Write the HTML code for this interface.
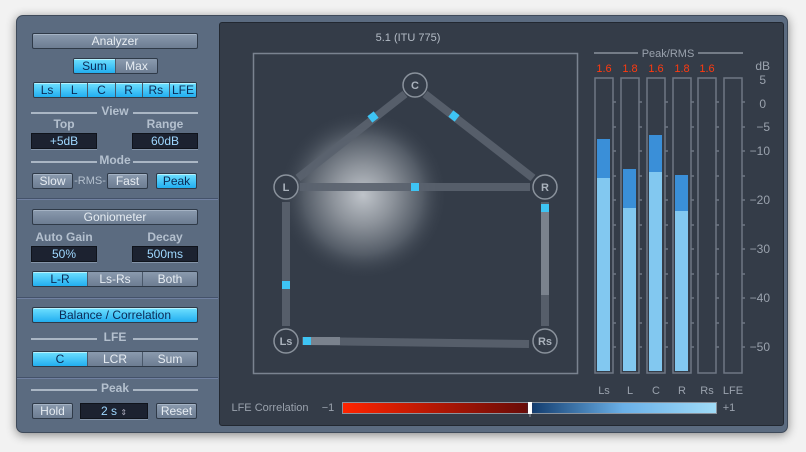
<!DOCTYPE html><html><head><meta charset="utf-8"><style>
*{box-sizing:border-box;margin:0;padding:0}
body{width:806px;height:452px;background:#f2f2f2;position:relative;overflow:hidden;font-family:"Liberation Sans",sans-serif}
.win{position:absolute;left:16px;top:15px;width:772px;height:418px;background:#5b6b80;border-radius:7px;box-shadow:0 2px 10px rgba(0,0,0,.45);border:1px solid #3e4a5a}
.a{position:absolute}
.btn{position:absolute;height:16px;background:linear-gradient(#8a9aae,#6d7d92);border:1px solid #2f3a48;border-radius:2px;color:#e6ecf2;font-size:12px;text-align:center;line-height:14px;box-shadow:inset 0 1px 0 #a5b3c4}
.on{background:linear-gradient(#6fe0ff,#22aef0);color:#0b2a55;box-shadow:inset 0 1px 0 #b5f2ff}
.seg{position:absolute;height:16px;border:1px solid #2f3a48;border-radius:2px;display:flex;overflow:hidden}
.seg div{flex:1;background:linear-gradient(#8a9aae,#6d7d92);color:#e6ecf2;font-size:12px;text-align:center;line-height:14px;border-left:1px solid #4a586a}
.seg div:first-child{border-left:none}
.seg div.on{background:linear-gradient(#6fe0ff,#22aef0);color:#0b2a55}
.box{position:absolute;height:16px;background:#1c2230;border:1px solid #0f131b;color:#9fd8ff;font-size:12px;text-align:center;line-height:14px;box-shadow:0 1px 0 #8494a8}
.lbl{position:absolute;color:#b4c0ce;font-size:12px;font-weight:bold;text-align:center}
.hl{position:absolute;height:2px;background:#aab6c4}
.sep{position:absolute;left:17px;width:201px;height:2px;background:#44526a;border-bottom:1px solid #7080a0}
.dark{position:absolute;left:219px;top:22px;width:565px;height:404px;background:#343c48;border:1px solid #222831;border-radius:3px}
</style></head><body>
<div class="win"></div>
<div class="btn" style="left:32px;top:33px;width:166px">Analyzer</div>
<div class="seg" style="left:73px;top:58px;width:85px"><div class="on">Sum</div><div>Max</div></div>
<div class="seg" style="left:33px;top:82px;width:164px"><div class="on">Ls</div><div class="on">L</div><div class="on">C</div><div class="on">R</div><div class="on">Rs</div><div class="on">LFE</div></div>
<div class="hl" style="left:31px;top:112px;width:66px"></div><div class="lbl" style="left:97px;top:104px;width:36px">View</div><div class="hl" style="left:133px;top:112px;width:65px"></div>
<div class="lbl" style="left:31px;top:117px;width:66px">Top</div><div class="lbl" style="left:132px;top:117px;width:66px">Range</div>
<div class="box" style="left:31px;top:133px;width:66px">+5dB</div><div class="box" style="left:132px;top:133px;width:66px">60dB</div>
<div class="hl" style="left:31px;top:161px;width:66px"></div><div class="lbl" style="left:97px;top:153px;width:36px">Mode</div><div class="hl" style="left:133px;top:161px;width:65px"></div>
<div class="btn" style="left:32px;top:173px;width:41px">Slow</div><div class="lbl" style="left:73px;top:175px;width:34px;font-weight:normal;font-size:11px">-RMS-</div>
<div class="btn" style="left:107px;top:173px;width:41px">Fast</div><div class="btn on" style="left:156px;top:173px;width:41px">Peak</div>
<div class="sep" style="top:198px"></div>
<div class="btn" style="left:32px;top:209px;width:166px">Goniometer</div>
<div class="lbl" style="left:29px;top:230px;width:70px">Auto Gain</div><div class="lbl" style="left:132px;top:230px;width:66px">Decay</div>
<div class="box" style="left:31px;top:246px;width:66px">50%</div><div class="box" style="left:132px;top:246px;width:66px">500ms</div>
<div class="seg" style="left:32px;top:271px;width:166px"><div class="on">L-R</div><div>Ls-Rs</div><div>Both</div></div>
<div class="sep" style="top:297px"></div>
<div class="btn on" style="left:32px;top:307px;width:166px">Balance / Correlation</div>
<div class="hl" style="left:31px;top:338px;width:66px"></div><div class="lbl" style="left:97px;top:330px;width:36px">LFE</div><div class="hl" style="left:133px;top:338px;width:65px"></div>
<div class="seg" style="left:32px;top:351px;width:166px"><div class="on">C</div><div>LCR</div><div>Sum</div></div>
<div class="sep" style="top:377px"></div>
<div class="hl" style="left:31px;top:389px;width:66px"></div><div class="lbl" style="left:97px;top:381px;width:36px">Peak</div><div class="hl" style="left:133px;top:389px;width:65px"></div>
<div class="btn" style="left:32px;top:403px;width:41px">Hold</div>
<div class="box" style="left:80px;top:403px;width:68px">2 s <span style="font-size:8px;color:#aab">&#8661;</span></div>
<div class="btn" style="left:156px;top:403px;width:41px">Reset</div>
<div class="dark"></div>
<div class="a" style="left:358px;top:32px;width:100px;text-align:center;color:#b4bcc6;font-size:11px">5.1 (ITU 775)</div>
<svg class="a" style="left:0;top:0" width="806" height="452">
<defs><radialGradient id="g" cx="0.5" cy="0.5" r="0.5"><stop offset="0" stop-color="#bfc4ca"/><stop offset=".35" stop-color="#8d939b"/><stop offset=".7" stop-color="#545c67"/><stop offset="1" stop-color="#343c48" stop-opacity="0"/></radialGradient></defs>
<rect x="253.5" y="53.5" width="324" height="320" fill="none" stroke="#7a8390" stroke-width="1.5"/>
<circle cx="363" cy="195" r="85" fill="url(#g)"/>
<g stroke="#5a626e" stroke-width="8" opacity=".9">
<line x1="298" y1="178" x2="405" y2="94"/><line x1="425" y1="94" x2="533" y2="178"/>
<line x1="300" y1="187" x2="530" y2="187"/><line x1="286" y1="202" x2="286" y2="326"/>
<line x1="545" y1="202" x2="545" y2="326"/><line x1="302" y1="341" x2="529" y2="344"/></g>
<line x1="545" y1="210" x2="545" y2="295" stroke="#7a828d" stroke-width="8"/>
<line x1="306" y1="341" x2="340" y2="341" stroke="#7a828d" stroke-width="8"/>
<g fill="#3ec4f4"><rect x="369" y="113" width="8" height="8" transform="rotate(-38 373 117)"/><rect x="450" y="112" width="8" height="8" transform="rotate(38 454 116)"/>
<rect x="411" y="183" width="8" height="8"/><rect x="282" y="281" width="8" height="8"/><rect x="541" y="204" width="8" height="8"/><rect x="303" y="337" width="8" height="8"/></g>
<g fill="#343c48" stroke="#8a929c" stroke-width="1.5"><circle cx="415" cy="85" r="12"/><circle cx="286" cy="187" r="12"/><circle cx="545" cy="187" r="12"/><circle cx="286" cy="341" r="12"/><circle cx="545" cy="341" r="12"/></g>
<g fill="#aab2bc" font-size="11" font-weight="bold" text-anchor="middle" font-family="Liberation Sans"><text x="415" y="89">C</text><text x="286" y="191">L</text><text x="545" y="191">R</text><text x="286" y="345">Ls</text><text x="545" y="345">Rs</text></g>
<line x1="594" y1="53" x2="638" y2="53" stroke="#8a929c" stroke-width="1.5"/><line x1="698" y1="53" x2="743" y2="53" stroke="#8a929c" stroke-width="1.5"/>
<text x="668" y="57" fill="#9aa2ad" font-size="11" text-anchor="middle" font-family="Liberation Sans">Peak/RMS</text>
<g fill="#ff3a10" font-size="11" text-anchor="middle" font-family="Liberation Sans"><text x="604" y="72">1.6</text><text x="630" y="72">1.8</text><text x="656" y="72">1.6</text><text x="682" y="72">1.8</text><text x="707" y="72">1.6</text></g>
<g fill="#9aa2ad" font-size="12" text-anchor="end" font-family="Liberation Sans"><text x="770" y="70">dB</text><text x="766" y="84">5</text><text x="766" y="108">0</text><text x="770" y="131">−5</text><text x="770" y="155">−10</text><text x="770" y="204">−20</text><text x="770" y="253">−30</text><text x="770" y="302">−40</text><text x="770" y="351">−50</text></g>
<g fill="#3a8fd8"><rect x="597" y="139" width="13" height="232"/><rect x="623" y="169" width="13" height="202"/><rect x="649" y="135" width="13" height="236"/><rect x="675" y="175" width="13" height="196"/></g>
<g fill="#82c8f0"><rect x="597" y="178" width="13" height="193"/><rect x="623" y="208" width="13" height="163"/><rect x="649" y="172" width="13" height="199"/><rect x="675" y="211" width="13" height="160"/></g>
<g fill="none" stroke="#6e7784" stroke-width="1.5"><rect x="595" y="78" width="18" height="295"/><rect x="621" y="78" width="18" height="295"/><rect x="647" y="78" width="18" height="295"/><rect x="673" y="78" width="18" height="295"/><rect x="698" y="78" width="18" height="295"/><rect x="724" y="78" width="18" height="295"/></g>
<g stroke="#6e7784" stroke-width="1.5">
<path d="M613 102h3M613 127h3M613 151h3M613 176h3M613 200h3M613 225h3M613 249h3M613 274h3M613 298h3M613 323h3M613 347h3"/>
<path d="M639 102h3M639 127h3M639 151h3M639 176h3M639 200h3M639 225h3M639 249h3M639 274h3M639 298h3M639 323h3M639 347h3"/>
<path d="M665 102h3M665 127h3M665 151h3M665 176h3M665 200h3M665 225h3M665 249h3M665 274h3M665 298h3M665 323h3M665 347h3"/>
<path d="M691 102h3M691 127h3M691 151h3M691 176h3M691 200h3M691 225h3M691 249h3M691 274h3M691 298h3M691 323h3M691 347h3"/>
<path d="M716 102h3M716 127h3M716 151h3M716 176h3M716 200h3M716 225h3M716 249h3M716 274h3M716 298h3M716 323h3M716 347h3"/>
<path d="M742 102h3M742 127h3M742 151h3M742 176h3M742 200h3M742 225h3M742 249h3M742 274h3M742 298h3M742 323h3M742 347h3"/>
</g>
<g fill="#9aa2ad" font-size="11" text-anchor="middle" font-family="Liberation Sans"><text x="604" y="394">Ls</text><text x="630" y="394">L</text><text x="656" y="394">C</text><text x="682" y="394">R</text><text x="707" y="394">Rs</text><text x="733" y="394">LFE</text>
<text x="270" y="411">LFE Correlation</text><text x="328" y="411">−1</text><text x="729" y="411">+1</text></g>
<defs><linearGradient id="c" x1="0" x2="1"><stop offset="0" stop-color="#ff2400"/><stop offset=".49" stop-color="#6a0c08"/><stop offset=".51" stop-color="#143e70"/><stop offset=".75" stop-color="#6ab0e8"/><stop offset="1" stop-color="#a0dcf8"/></linearGradient></defs>
<rect x="342.5" y="402.5" width="374" height="11" fill="url(#c)" stroke="#8a929c"/>
<rect x="528" y="402" width="4" height="12" fill="#fff"/>
<line x1="530" y1="414" x2="530" y2="417" stroke="#8a929c"/>
</svg>
</body></html>
